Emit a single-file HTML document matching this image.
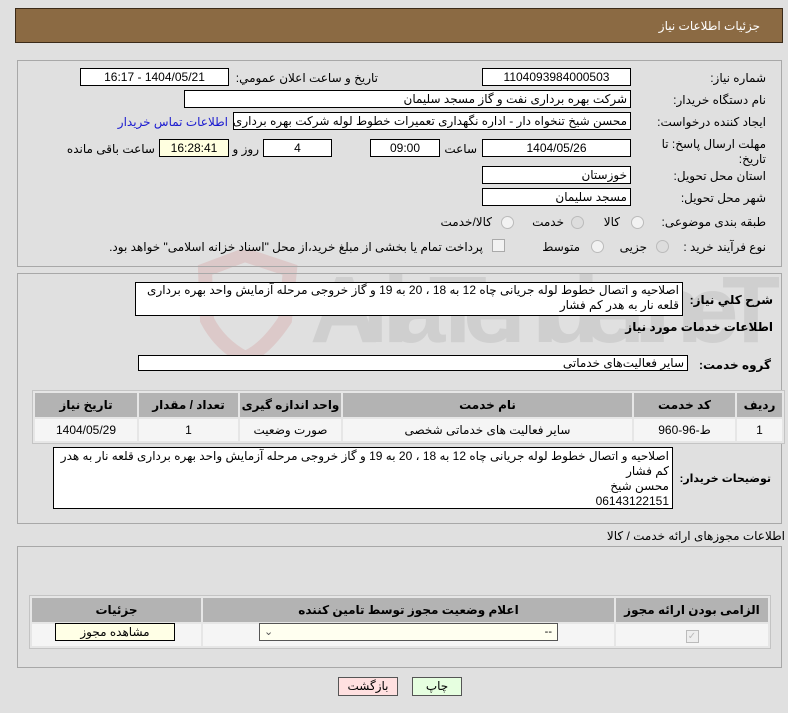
<!DOCTYPE html>
<html><head><meta charset="utf-8"><style>
body{margin:0;width:788px;height:713px;background:#e0e0e0;font-family:"Liberation Sans","DejaVu Sans",sans-serif;font-size:12px;color:#000;position:relative;overflow:hidden}
.a{position:absolute;white-space:nowrap}
.in{position:absolute;background:#fff;border:1px solid #000;box-sizing:border-box;height:18px;line-height:16px;padding:0 3px;direction:rtl;text-align:right;white-space:nowrap;overflow:hidden}
.c{text-align:center}
.lbl{position:absolute;direction:rtl;text-align:right;white-space:nowrap}
.b{font-weight:bold;font-size:12px}
.panel{position:absolute;border:1px solid #a8a8a8;box-sizing:border-box}
table{border-collapse:separate;border-spacing:2px;position:absolute;background:#e6e6e6;border:1px solid #c4c4c4;direction:rtl}
th{background:#b3b3b3;font-weight:bold;height:22px;font-size:12px}
td{background:#f5f5f5;text-align:center;height:20px}
.radio{position:absolute;width:11px;height:11px;border:1px solid #bbb;border-radius:50%;background:#f2f2f2}
</style></head><body>
<div class="a" style="left:15px;top:8px;width:768px;height:35px;background:#8b6a43;border:1px solid #3a2a18;box-sizing:border-box"></div>
<div class="lbl" style="right:28px;top:19px;color:#fff">جزئیات اطلاعات نیاز</div>

<svg class="a" style="left:195px;top:250px;opacity:.18" width="593" height="110">
<path d="M10 20 L50 5 L95 20 L90 70 Q70 100 50 108 Q25 95 12 70 Z" fill="none" stroke="#c66" stroke-width="14"/>
<text x="115" y="92" font-family="Liberation Sans" font-size="95" font-weight="bold" fill="#888" textLength="470">AriaTender.neT</text>
</svg>

<div class="panel" style="left:17px;top:60px;width:765px;height:207px"></div>
<div class="lbl" style="right:22px;top:71px">شماره نیاز:</div>
<div class="in c" style="left:482px;top:68px;width:149px">1104093984000503</div>
<div class="lbl" style="right:410px;top:71px">تاریخ و ساعت اعلان عمومي:</div>
<div class="in c" style="left:80px;top:68px;width:149px">1404/05/21 - 16:17</div>
<div class="lbl" style="right:22px;top:93px">نام دستگاه خریدار:</div>
<div class="in" style="left:184px;top:90px;width:447px">شرکت بهره برداری نفت و گاز مسجد سلیمان</div>
<div class="lbl" style="right:22px;top:115px">ایجاد کننده درخواست:</div>
<div class="in" style="left:233px;top:112px;width:398px">محسن شیخ تنخواه دار - اداره نگهداری تعمیرات خطوط لوله  شرکت بهره برداری</div>
<div class="lbl" style="right:560px;top:115px;color:#1a1ad0">اطلاعات تماس خریدار</div>
<div class="lbl" style="right:22px;top:137px">مهلت ارسال پاسخ: تا</div>
<div class="lbl" style="right:22px;top:152px">تاریخ:</div>
<div class="in c" style="left:482px;top:139px;width:149px">1404/05/26</div>
<div class="lbl" style="right:311px;top:142px">ساعت</div>
<div class="in c" style="left:370px;top:139px;width:70px">09:00</div>
<div class="in c" style="left:263px;top:139px;width:69px">4</div>
<div class="lbl" style="right:529px;top:142px">روز و</div>
<div class="in c" style="left:159px;top:139px;width:70px;background:#ffffe0">16:28:41</div>
<div class="lbl" style="right:633px;top:142px">ساعت باقی مانده</div>
<div class="lbl" style="right:22px;top:169px">استان محل تحویل:</div>
<div class="in" style="left:482px;top:166px;width:149px">خوزستان</div>
<div class="lbl" style="right:22px;top:191px">شهر محل تحویل:</div>
<div class="in" style="left:482px;top:188px;width:149px">مسجد سلیمان</div>
<div class="lbl" style="right:22px;top:215px">طبقه بندی موضوعی:</div>
<div class="radio" style="left:631px;top:216px"></div><div class="lbl" style="right:168px;top:215px">کالا</div>
<div class="radio" style="left:571px;top:216px;background:#ddd"></div><div class="lbl" style="right:224px;top:215px">خدمت</div>
<div class="radio" style="left:501px;top:216px"></div><div class="lbl" style="right:296px;top:215px">کالا/خدمت</div>
<div class="lbl" style="right:22px;top:240px">نوع فرآیند خرید :</div>
<div class="radio" style="left:656px;top:240px;background:#ddd"></div><div class="lbl" style="right:141px;top:240px">جزیی</div>
<div class="radio" style="left:591px;top:240px"></div><div class="lbl" style="right:208px;top:240px">متوسط</div>
<div class="a" style="left:492px;top:239px;width:11px;height:11px;border:1px solid #aaa;background:#f2f2f2"></div>
<div class="lbl" style="right:305px;top:240px">پرداخت تمام یا بخشی از مبلغ خرید،از محل "اسناد خزانه اسلامی" خواهد بود.</div>

<div class="panel" style="left:17px;top:273px;width:765px;height:251px"></div>
<div class="lbl b" style="right:15px;top:293px">شرح کلي نیاز:</div>
<div class="in" style="left:135px;top:282px;width:548px;height:34px;white-space:normal;line-height:15px">اصلاحیه و اتصال خطوط لوله جریانی چاه 12 به 18 ، 20 به 19 و گاز خروجی مرحله آزمایش واحد بهره برداری قلعه نار به هدر کم فشار</div>
<div class="lbl b" style="right:15px;top:320px">اطلاعات خدمات مورد نیاز</div>
<div class="lbl b" style="right:17px;top:358px">گروه خدمت:</div>
<div class="in" style="left:138px;top:355px;width:550px;height:16px;line-height:14px">سایر فعالیت‌های خدماتی</div>
<table style="left:32px;top:390px;width:753px">
<tr><th style="width:43px">ردیف</th><th style="width:99px">کد خدمت</th><th>نام خدمت</th><th style="width:99px">واحد اندازه گیری</th><th style="width:97px">تعداد / مقدار</th><th style="width:100px">تاریخ نیاز</th></tr>
<tr><td>1</td><td>ط-96-960</td><td>سایر فعالیت های خدماتی شخصی</td><td>صورت وضعیت</td><td>1</td><td>1404/05/29</td></tr>
</table>
<div class="lbl b" style="right:17px;top:472px;font-size:11px">توضیحات خریدار:</div>
<div class="in" style="left:53px;top:447px;width:620px;height:62px;white-space:normal;line-height:15px;padding-top:1px">اصلاحیه و اتصال خطوط لوله جریانی چاه 12 به 18 ، 20 به 19 و گاز خروجی مرحله آزمایش واحد بهره برداری قلعه نار به هدر کم فشار<br>محسن شیخ<br>06143122151</div>

<div class="lbl" style="right:3px;top:529px">اطلاعات مجوزهای ارائه خدمت / کالا</div>
<div class="panel" style="left:17px;top:546px;width:765px;height:122px"></div>
<table style="left:29px;top:595px;width:742px">
<tr><th style="width:150px">الزامی بودن ارائه مجوز</th><th>اعلام وضعیت مجوز توسط تامین کننده</th><th style="width:167px">جزئیات</th></tr>
<tr><td><span style="display:inline-block;width:11px;height:11px;border:1px solid #bbb;background:#eee;color:#bbb;font-size:10px;line-height:11px">✓</span></td><td></td><td></td></tr>
</table>
<div class="a" style="left:259px;top:623px;width:299px;height:18px;border:1px solid #555;background:#fffff0;box-sizing:border-box;font-size:11px;line-height:16px"><span style="position:absolute;left:4px;color:#555">⌄</span><span style="position:absolute;right:5px">--</span></div>
<div class="a c" style="left:55px;top:623px;width:120px;height:18px;border:1px solid #000;background:#ffffe6;box-sizing:border-box;line-height:16px">مشاهده مجوز</div>
<div class="a c" style="left:412px;top:677px;width:50px;height:19px;border:1px solid #555;background:#e6ffe0;box-sizing:border-box;line-height:17px">چاپ</div>
<div class="a c" style="left:338px;top:677px;width:60px;height:19px;border:1px solid #555;background:#ffe0e0;box-sizing:border-box;line-height:17px">بازگشت</div>
</body></html>
